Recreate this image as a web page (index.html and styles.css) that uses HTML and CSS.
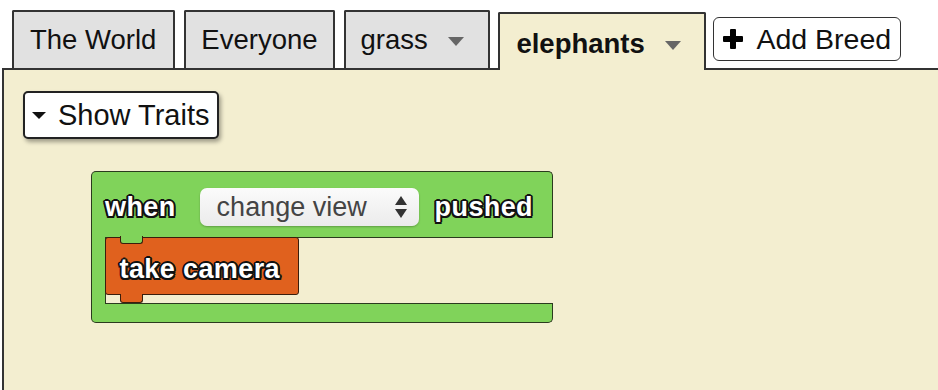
FILE: index.html
```html
<!DOCTYPE html>
<html>
<head>
<meta charset="utf-8">
<link rel="stylesheet" href="styles.css">
</head>
<body>
<div class="tabs">
  <div class="tab tab-world">The World</div>
  <div class="tab tab-everyone">Everyone</div>
  <div class="tab tab-breed">grass <span class="caret"></span></div>
  <div class="tab tab-breed tab-active">elephants <span class="caret"></span></div>
  <button class="add-btn">
    <svg class="plus" width="20" height="20" viewBox="0 0 20 20"><rect x="7" y="0" width="6" height="20" rx="1" fill="#000"/><rect x="0" y="7" width="20" height="6" rx="1" fill="#000"/></svg>
    <span>Add Breed</span>
  </button>
</div>
<div class="panel">
  <button class="traits-btn"><span class="down"></span><span>Show Traits</span></button>
  <div class="cblock">
    <div class="c-top">
      <span class="blk-text">when</span>
      <div class="select"><span>change view</span>
        <svg class="updown" width="12" height="22" viewBox="0 0 12 22"><polygon points="6,0 12,9 0,9" fill="#333"/><polygon points="0,13 12,13 6,22" fill="#333"/></svg>
      </div>
      <span class="blk-text">pushed</span>
    </div>
    <div class="c-mid">
      <div class="spine"></div>
      <div class="mouth">
        <div class="cmd"><span class="blk-text">take camera</span></div>
      </div>
    </div>
    <div class="c-bottom"></div>
  </div>
</div>
</body>
</html>
```
FILE: styles.css
```css
html, body {
  margin: 0;
  padding: 0;
  background: #ffffff;
  overflow: hidden;
}
body {
  font-family: "Liberation Sans", Arial, sans-serif;
  width: 938px;
  height: 390px;
}
.tabs {
  display: flex;
  align-items: flex-end;
  height: 68px;
  box-sizing: border-box;
  padding-left: 12px;
  gap: 9px;
}
.tab {
  height: 58px;
  box-sizing: border-box;
  border: 2px solid #333;
  border-bottom: none;
  border-radius: 2px 2px 0 0;
  background: #e1e1e1;
  display: flex;
  align-items: center;
  padding: 0 17px 0 16px;
  font-size: 27.5px;
  color: #111;
  white-space: pre;
}
.tab-everyone {
  padding: 0 15px 0 15px;
}
.tab-breed {
  padding: 0 24px 0 15px;
}
.caret {
  display: inline-block;
  width: 0;
  height: 0;
  margin-left: 13px;
  margin-top: 2px;
  border-left: 8px solid transparent;
  border-right: 8px solid transparent;
  border-top: 9px solid #666;
}
.tab-active {
  height: 58px;
  margin-bottom: -2px;
  margin-left: -1px;
  background: #f3eed0;
  font-weight: bold;
  position: relative;
  z-index: 1;
  padding: 4px 23px 0 16px;
}
.add-btn {
  align-self: flex-start;
  margin-top: 17px;
  margin-left: -2px;
  height: 44px;
  box-sizing: border-box;
  border: 1.5px solid #333;
  border-radius: 6px;
  background: #fff;
  display: flex;
  align-items: center;
  gap: 13px;
  padding: 0 9px 0 9px;
  font-family: "Liberation Sans", Arial, sans-serif;
  font-size: 28.5px;
  color: #111;
}
.plus { display: block; }
.panel {
  margin-left: 2px;
  border-left: 2px solid #333;
  border-top: 2px solid #333;
  background: #f3eed0;
  height: 322px;
  box-sizing: border-box;
  padding: 21px 0 0 19px;
}
.traits-btn {
  display: flex;
  align-items: center;
  height: 48px;
  box-sizing: border-box;
  border: 2px solid #222;
  border-radius: 5px;
  background: #fff;
  box-shadow: 2px 3px 4px rgba(0,0,0,0.35);
  padding: 0 7px 0 7px;
  gap: 12px;
  font-family: "Liberation Sans", Arial, sans-serif;
  font-size: 29px;
  color: #111;
}
.down {
  display: inline-block;
  width: 0;
  height: 0;
  border-left: 7px solid transparent;
  border-right: 7px solid transparent;
  border-top: 7px solid #111;
}
.cblock {
  margin-top: 32px;
  margin-left: 68px;
  width: 462px;
  display: flex;
  flex-direction: column;
}
.blk-text {
  font-family: "Liberation Sans", Arial, sans-serif;
  font-weight: bold;
  font-size: 27px;
  letter-spacing: 0.4px;
  color: #fff;
  text-shadow:
    -1.5px -1.5px 0 #111, 1.5px -1.5px 0 #111, -1.5px 1.5px 0 #111, 1.5px 1.5px 0 #111,
    0 -2px 0 #111, 0 2px 0 #111, -2px 0 0 #111, 2px 0 0 #111;
}
.c-top {
  height: 66px;
  box-sizing: border-box;
  background: #80d35a;
  border: 1.5px solid #2a3a1e;
  border-bottom: none;
  border-radius: 5px 5px 0 0;
  display: flex;
  align-items: center;
  padding: 5px 0 0 13px;
}
.select {
  margin-left: 24px;
  margin-right: 16px;
  width: 219px;
  height: 38px;
  box-sizing: border-box;
  border-radius: 7px;
  background: linear-gradient(#fbfbfb, #ebebeb);
  box-shadow: 0 1px 2px rgba(0,0,0,0.25);
  display: flex;
  align-items: center;
  justify-content: space-between;
  padding: 0 12px 0 17px;
  font-size: 27px;
  color: #444;
}
.updown { display: block; }
.c-mid {
  display: flex;
  height: 67px;
}
.spine {
  width: 14px;
  box-sizing: border-box;
  background: #80d35a;
  border-left: 1.5px solid #2a3a1e;
}
.mouth {
  flex: 1;
  box-sizing: border-box;
  background: #f3eed0;
  border: 1.5px solid #2a3a1e;
  border-right: none;
}
.cmd {
  position: relative;
  margin: -1.5px 0 0 -1.5px;
  width: 194px;
  height: 58px;
  box-sizing: border-box;
  background: #e0611e;
  border: 1.5px solid #3a1e0c;
  border-radius: 3px;
  display: flex;
  align-items: center;
  padding: 8px 0 0 14px;
}
.cmd::before {
  content: "";
  position: absolute;
  top: -1.5px;
  left: 14px;
  width: 23px;
  height: 8px;
  box-sizing: border-box;
  background: #80d35a;
  border: 1.5px solid #3a1e0c;
  border-top: none;
  border-radius: 0 0 3px 3px;
}
.cmd::after {
  content: "";
  position: absolute;
  bottom: -9px;
  left: 14px;
  width: 23px;
  height: 9px;
  box-sizing: border-box;
  background: #e0611e;
  border: 1.5px solid #3a1e0c;
  border-top: none;
  border-radius: 0 0 3px 3px;
}
.c-bottom {
  height: 19px;
  box-sizing: border-box;
  background: #80d35a;
  border: 1.5px solid #2a3a1e;
  border-top: none;
  border-radius: 0 0 5px 5px;
}
```
